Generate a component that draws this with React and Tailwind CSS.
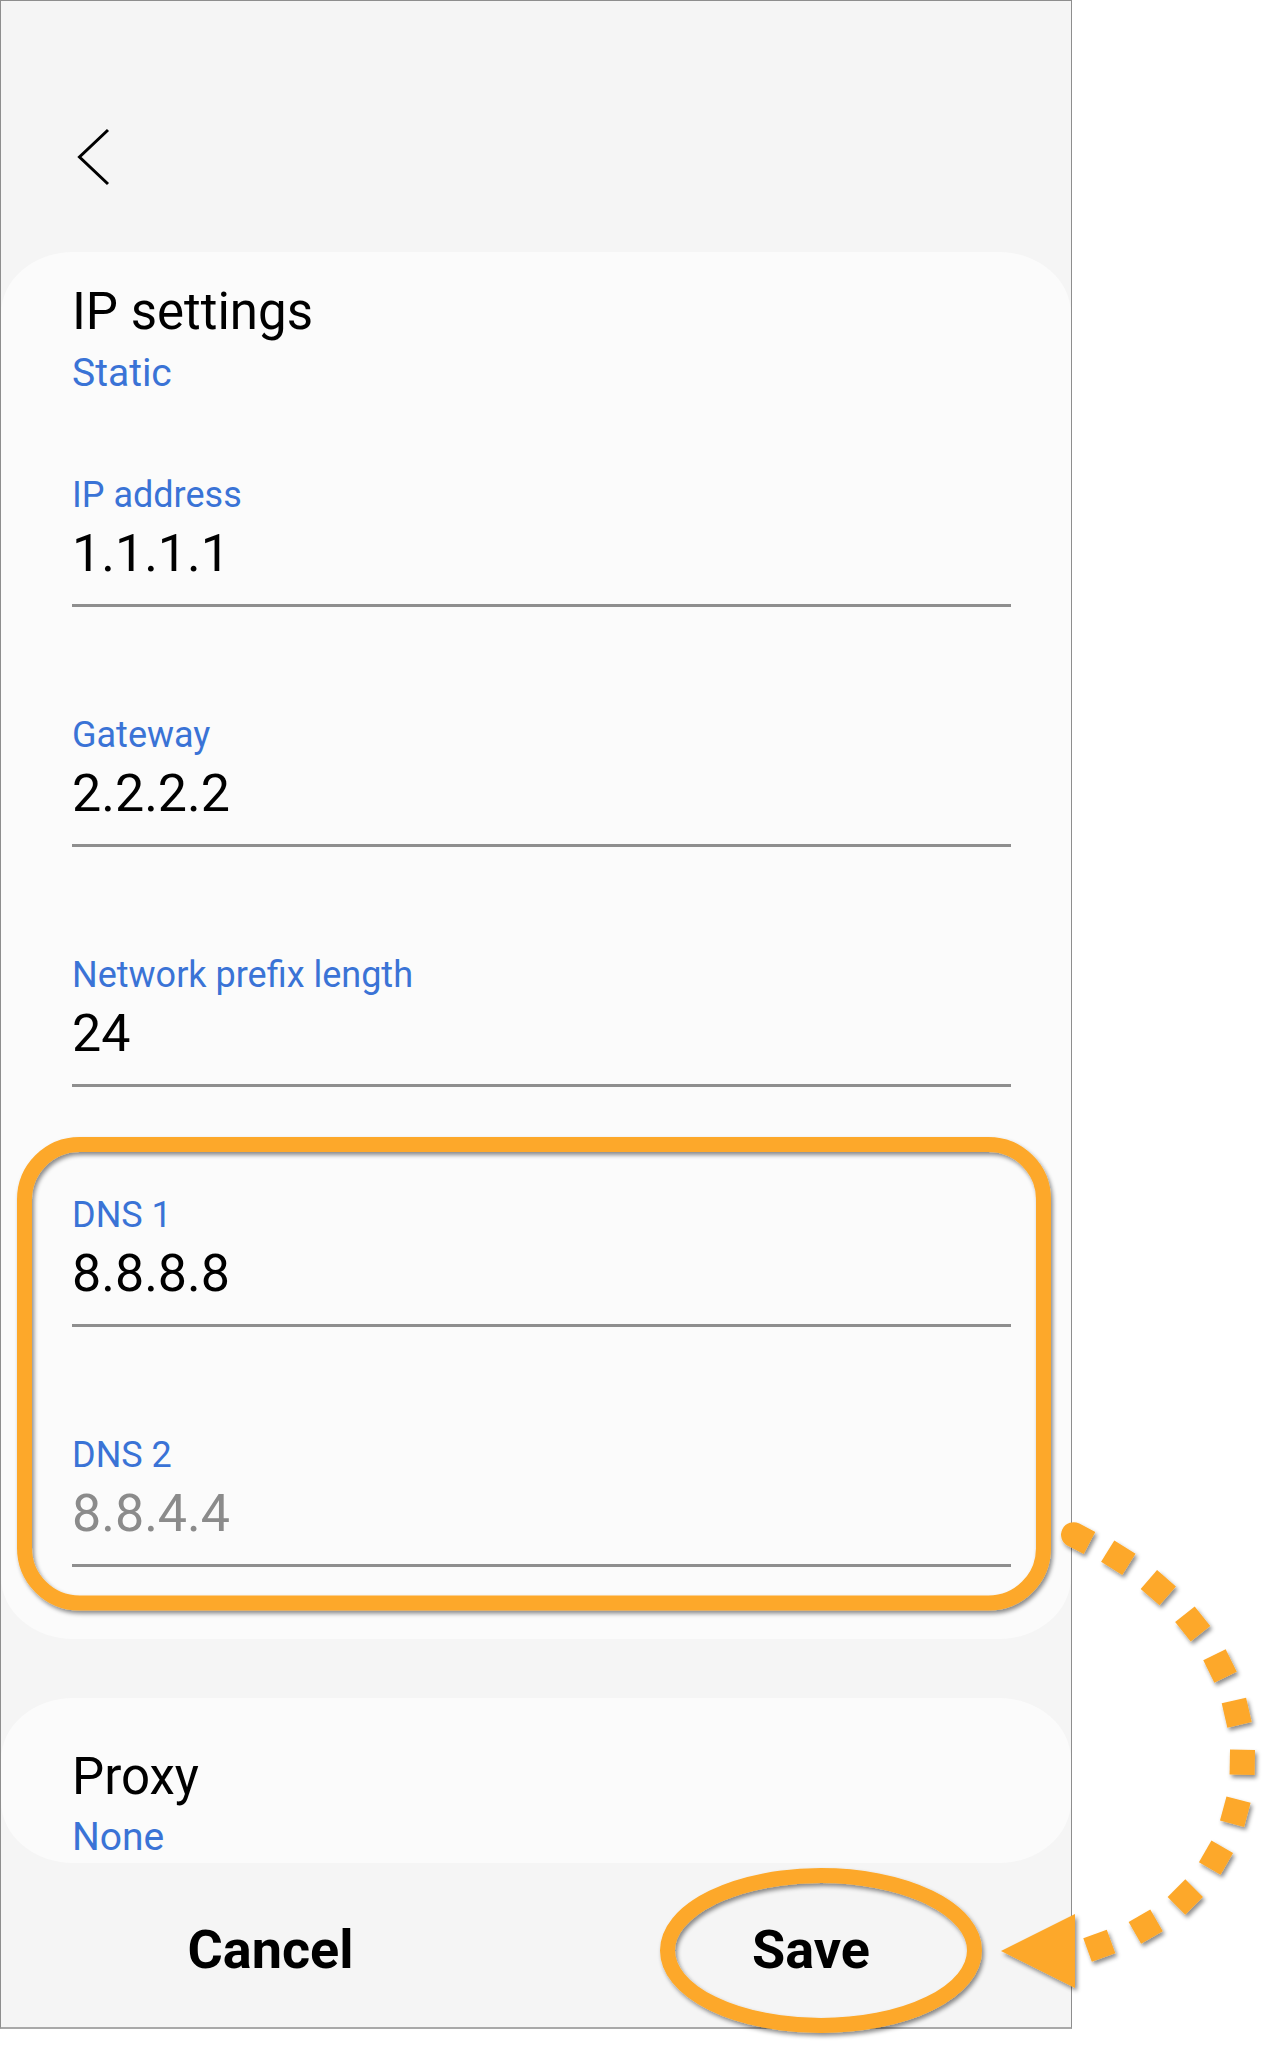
import React from "react";

function Field({ label, value, muted }) {
  return (
    <div className="border-b-[3px] border-[#8e8e8e] pb-[20px]">
      <div className="text-[36px] leading-[40px] text-[#3a73d6]">{label}</div>
      <div
        className={
          "mt-[9px] text-[52px] leading-[60px] " +
          (muted ? "text-[#8b8b8b]" : "text-black")
        }
      >
        {value}
      </div>
    </div>
  );
}

const DOTS = [
  [1118.3, 1557.7, 32],
  [1158.3, 1587.7, 41],
  [1192.7, 1624, 51.5],
  [1220, 1666, 63.7],
  [1236.7, 1712.7, 77],
  [1242.3, 1762.3, 91],
  [1235.3, 1811.7, 105],
  [1216, 1857.7, 120],
  [1185.3, 1897, 135],
  [1145.7, 1926.7, 150],
  [1099.3, 1945.7, 160],
];

function Overlay() {
  const orange = "#fda829";
  return (
    <svg
      className="absolute left-0 top-0 pointer-events-none"
      width="1285"
      height="2065"
      viewBox="0 0 1285 2065"
    >
      <defs>
        <filter id="sh" x="-20%" y="-20%" width="140%" height="140%">
          <feDropShadow dx="2" dy="3" stdDeviation="2" floodColor="#000" floodOpacity="0.45" />
        </filter>
      </defs>
      <g filter="url(#sh)">
        <rect
          x="24.5"
          y="1144.5"
          width="1019"
          height="458.5"
          rx="55"
          fill="none"
          stroke={orange}
          strokeWidth="15"
        />
        <ellipse cx="821" cy="1950.5" rx="153.5" ry="75" fill="none" stroke={orange} strokeWidth="15" />
        <g transform="translate(1078 1537) rotate(27.6)">
          <path d="M -5 -12.5 H 13 V 12.5 H -5 A 12.5 12.5 0 0 1 -5 -12.5 Z" fill={orange} />
        </g>
        {DOTS.map(([cx, cy, a], i) => (
          <rect
            key={i}
            x={cx - 12.5}
            y={cy - 12.5}
            width="25"
            height="25"
            fill={orange}
            transform={`rotate(${a} ${cx} ${cy})`}
          />
        ))}
        <polygon points="1001,1951 1075,1914 1075,1988" fill={orange} />
      </g>
    </svg>
  );
}

export default function App() {
  return (
    <div className="relative w-[1285px] h-[2065px] bg-white overflow-hidden font-[Roboto,'Noto_Sans',sans-serif]">
      <div className="w-[1072px] border border-[#8e8e8e] border-b-2 border-b-[#a9a9a9] bg-[#f5f5f5] flex flex-col">
        <div className="h-[251px] pl-[76px] pt-[127px]">
          <svg width="34" height="58" viewBox="0 0 34 58">
            <path d="M31 2 L2.5 29 L31 56" fill="none" stroke="#000" strokeWidth="3" />
          </svg>
        </div>

        <div className="h-[1387px] rounded-[72px/62px] bg-[#fbfbfb] pl-[71px] pr-[60px] pt-[30px] flex flex-col">
          <div className="text-[51px] leading-[60px] text-black">IP settings</div>
          <div className="mt-[8px] text-[39px] leading-[46px] text-[#3a73d6]">Static</div>
          <div className="mt-[79px] flex flex-col gap-[108px]">
            <Field label="IP address" value="1.1.1.1" />
            <Field label="Gateway" value="2.2.2.2" />
            <Field label="Network prefix length" value="24" />
            <Field label="DNS 1" value="8.8.8.8" />
            <Field label="DNS 2" value="8.8.4.4" muted />
          </div>
        </div>

        <div className="h-[59px]" />

        <div className="h-[165px] rounded-[72px/62px] bg-[#fbfbfb] pl-[71px] pt-[49px] overflow-hidden">
          <div className="text-[51px] leading-[60px] text-black">Proxy</div>
          <div className="mt-[7px] text-[39px] leading-[46px] text-[#3a73d6]">None</div>
        </div>

        <div className="h-[164px] flex">
          <div className="w-[535px] shrink-0 text-center pt-[56px] pl-[4px] text-[54px] leading-[62px] font-bold text-black">
            Cancel
          </div>
          <div className="w-[535px] shrink-0 text-center pt-[56px] pl-[15px] text-[54px] leading-[62px] font-bold text-black">
            Save
          </div>
        </div>
      </div>
      <Overlay />
    </div>
  );
}
